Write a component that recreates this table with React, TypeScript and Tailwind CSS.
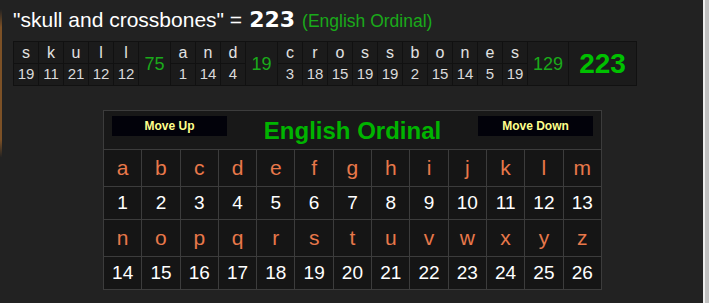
import React from 'react';

const words = ['skull', 'and', 'crossbones'];
const ord = (c: string) => c.charCodeAt(0) - 96;
const sumWidths = ['w-[32px]', 'w-[32px]', 'w-[41px]'];
const alphabet = 'abcdefghijklmnopqrstuvwxyz'.split('');

function Breakdown() {
  return (
    <div className="flex border-y border-r border-[#111] bg-[#1b1b1b] w-fit">
      {words.map((w, wi) => (
        <React.Fragment key={w}>
          {w.split('').map((c, i) => (
            <div key={i} className="flex w-[25px] flex-col border-l border-[#111]">
              <div className="flex h-[22px] items-center justify-center border-b border-[#111] text-[16px] text-[#e2e2e2]">
                {c}
              </div>
              <div className="flex h-[20px] items-center justify-center text-[15px] text-[#dadada]">
                {ord(c)}
              </div>
            </div>
          ))}
          <div
            className={`flex ${sumWidths[wi]} items-center justify-center border-l border-[#111] pt-[2px] text-[18px] text-[#1aaa1a]`}
          >
            {w.split('').reduce((s, c) => s + ord(c), 0)}
          </div>
        </React.Fragment>
      ))}
      <div className="flex w-[68px] items-center justify-center border-l border-[#111] pt-[1px] text-[28px] font-bold text-[#00c000]">
        223
      </div>
    </div>
  );
}

function MoveButton({ label }: { label: string }) {
  return (
    <div className="mt-[5px] flex h-[20px] w-[115px] items-center justify-center self-start bg-[#02020a] text-[12px] font-bold text-[#ffff8c]">
      {label}
    </div>
  );
}

function CipherTable() {
  const rows = [alphabet.slice(0, 13), alphabet.slice(13)];
  return (
    <table className="w-[499px] table-fixed border-collapse border border-[#3c3c3c] bg-[#151515]">
      <tbody>
        <tr className="h-[39px] bg-[#181818]">
          <td colSpan={13} className="border border-[#3c3c3c] p-0">
            <div className="flex h-[38px] items-center justify-between px-[8px]">
              <MoveButton label="Move Up" />
              <div className="pt-[1px] text-[24px] font-bold text-[#00b400]">English Ordinal</div>
              <MoveButton label="Move Down" />
            </div>
          </td>
        </tr>
        {rows.map((r, ri) => (
          <React.Fragment key={ri}>
            <tr className="h-[37px]">
              {r.map((c) => (
                <td key={c} className="border border-[#3c3c3c] p-0 text-center text-[21px] text-[#e8784a]">
                  {c}
                </td>
              ))}
            </tr>
            <tr className="h-[33px]">
              {r.map((c) => (
                <td key={c} className="border border-[#3c3c3c] p-0 text-center text-[19px] text-white">
                  {ord(c)}
                </td>
              ))}
            </tr>
          </React.Fragment>
        ))}
      </tbody>
    </table>
  );
}

export default function App() {
  return (
    <div className="flex h-[303px] w-[709px] overflow-hidden bg-[#222] font-['Liberation_Sans',Arial,sans-serif]">
      <div className="w-[2px] bg-[linear-gradient(to_bottom,transparent_3%,#7d5126_9%,#7d5126_46%,transparent_52%)]" />
      <div className="flex flex-1 flex-col">
        <div className="flex h-[41px] items-baseline gap-[7px] pl-[11px] pt-[8px] leading-[24px]">
          <span className="text-[21px] text-white">"skull and crossbones" =</span>
          <span className="font-['DejaVu_Sans',sans-serif] text-[22px] font-bold text-white">223</span>
          <span className="text-[17.5px] text-[#1aaa1a]">(English Ordinal)</span>
        </div>
        <div className="h-[44px] pl-[11px]">
          <Breakdown />
        </div>
        <div className="flex justify-center pt-[25px]">
          <CipherTable />
        </div>
      </div>
      <div className="w-[2px] bg-[#eeeeee]" />
      <div className="w-[4px] bg-[#c1c1c1]" />
    </div>
  );
}
